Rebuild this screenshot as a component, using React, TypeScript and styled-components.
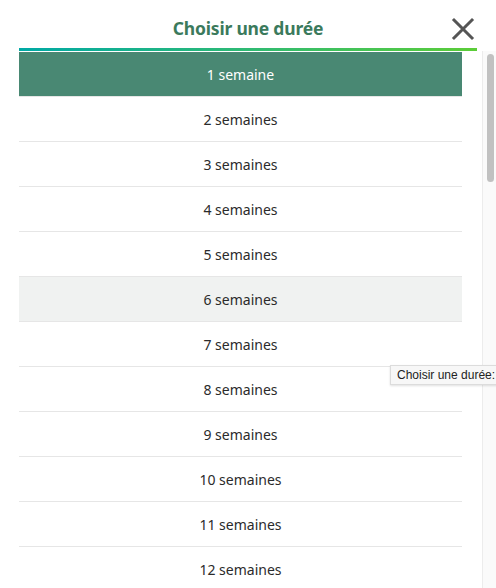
import React, { useState } from 'react';
import styled, { createGlobalStyle } from 'styled-components';

const GlobalStyle = createGlobalStyle`
  html, body {
    margin: 0;
    padding: 0;
    background: #ffffff;
    overflow: hidden;
  }
  body {
    font-family: 'Noto Sans', 'Open Sans', sans-serif;
  }
`;

// only the rows that fit in the visible part of the list
const weeks = Array.from({ length: 12 }, (_, i) => i + 1);

const App = () => {
  const [selected, setSelected] = useState(1);
  const hovered = 6;

  return (
    <>
      <GlobalStyle />
      <Modal>
        <Header>
          <Title>Choisir une durée</Title>
          <CloseButton aria-label="Fermer">
            <svg width="24" height="24" viewBox="0 0 24 24">
              <path d="M3 3 L21 21 M21 3 L3 21" stroke="#555555" strokeWidth="3" strokeLinecap="square" fill="none" />
            </svg>
          </CloseButton>
        </Header>
        <GradientLine />
        <Body>
          <List>
            {weeks.map((w) => (
              <Row
                key={w}
                $selected={w === selected}
                $hover={w === hovered && w !== selected}
                onClick={() => setSelected(w)}
              >
                {w === 1 ? '1 semaine' : `${w} semaines`}
              </Row>
            ))}
          </List>
          <ScrollTrack>
            <ScrollThumb />
          </ScrollTrack>
        </Body>
        <Tooltip>Choisir une durée:</Tooltip>
      </Modal>
    </>
  );
};

export default App;

const Modal = styled.div`
  position: relative;
  width: 496px;
  height: 588px;
  padding-left: 19px;
  box-sizing: border-box;
  display: flex;
  flex-direction: column;
  overflow: hidden;
`;

const Header = styled.div`
  position: relative;
  height: 48px;
  width: 458px;
  display: flex;
  align-items: center;
  justify-content: center;
`;

const Title = styled.h2`
  margin: 0;
  padding-top: 8px;
  font-family: 'Noto Sans', sans-serif;
  font-weight: 700;
  font-size: 17.5px;
  letter-spacing: -0.2px;
  color: #3b7a5c;
`;

const CloseButton = styled.button`
  position: absolute;
  right: 2px;
  top: 17px;
  width: 24px;
  height: 24px;
  padding: 0;
  border: none;
  background: transparent;
  display: flex;
  cursor: pointer;
`;

const GradientLine = styled.div`
  width: 458px;
  height: 3px;
  background: linear-gradient(90deg, #00a9a5 0%, #2fba73 50%, #5ccd38 100%);
`;

const Body = styled.div`
  flex: 1;
  min-height: 0;
  display: flex;
  justify-content: space-between;
  overflow: hidden;
`;

const List = styled.ul`
  list-style: none;
  margin: 1px 0 0;
  padding: 0;
  width: 443px;
  flex-shrink: 0;
`;

const Row = styled.li<{ $selected: boolean; $hover: boolean }>`
  height: 44px;
  display: flex;
  align-items: center;
  justify-content: center;
  border-bottom: 1px solid #e6e6e6;
  font-size: 14px;
  color: ${(p) => (p.$selected ? '#ffffff' : '#2b2b2b')};
  background: ${(p) => (p.$selected ? '#498873' : p.$hover ? '#f0f2f1' : '#ffffff')};
  cursor: pointer;
`;

const ScrollTrack = styled.div`
  width: 14px;
  box-sizing: border-box;
  background: #fafafa;
  border-left: 1px solid #ececec;
  padding: 3px 2px 0 4px;
`;

const ScrollThumb = styled.div`
  height: 128px;
  border-radius: 4px;
  background: #c1c1c1;
`;

const Tooltip = styled.div`
  position: absolute;
  left: 390px;
  top: 365px;
  padding: 2px 6px;
  background: #f7f7f7;
  border: 1px solid #dcdcdc;
  box-shadow: 0 1px 2px rgba(0, 0, 0, 0.12);
  font-family: 'Liberation Sans', Arial, sans-serif;
  font-size: 12px;
  line-height: 14px;
  color: #222222;
  white-space: nowrap;
`;
